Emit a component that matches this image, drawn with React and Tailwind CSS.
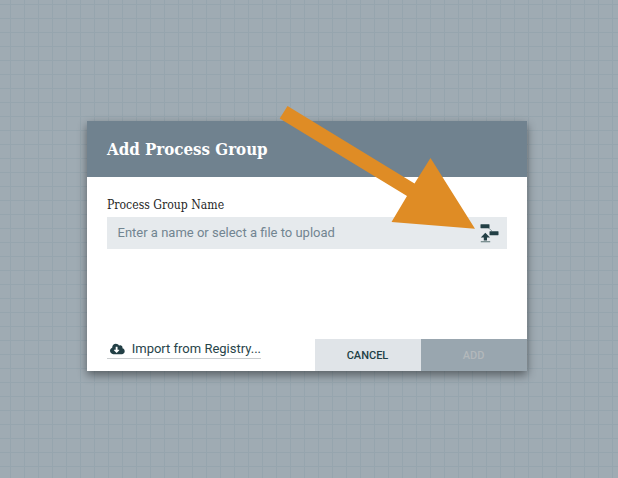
import { FaCloudDownloadAlt } from "react-icons/fa";

function UploadFlowIcon() {
  return (
    <svg width="19" height="20" viewBox="0 0 19 20" fill="#223f45" aria-hidden="true">
      <path d="M7.5 4 12 8" stroke="#8b9c9e" strokeWidth="1" />
      <rect x="0.5" y="1.3" width="9" height="3.9" rx="0.4" />
      <rect x="9.5" y="8.3" width="9" height="3.9" rx="0.4" />
      <path d="M5.3 9.8 10 14.4H7V17.5H3.8V14.4H0.8Z" />
      <rect x="0.8" y="18.1" width="9.4" height="1.2" fill="#6f8587" />
    </svg>
  );
}

export default function App() {
  return (
    <div className="relative h-[478px] w-[618px] overflow-hidden bg-[#9fabb3] bg-[linear-gradient(to_right,#96a5ae_1px,transparent_1px),linear-gradient(to_bottom,#96a5ae_1px,transparent_1px)] bg-[size:14px_14px] bg-[position:10px_4px] pl-[87px] pt-[121px] font-['Roboto',sans-serif]">
      <div className="flex h-[250px] w-[440px] flex-col bg-white shadow-[0_4px_9px_rgba(0,0,0,0.45)]">
        <header className="flex h-14 shrink-0 items-center bg-[#70828f] px-5 pt-[2px]">
          <h1 className="origin-left scale-x-[0.985] whitespace-nowrap font-['Roboto_Slab','DejaVu_Serif_Condensed','DejaVu_Serif',serif] text-[17px] font-bold text-white">
            Add Process Group
          </h1>
        </header>
        <main className="flex-1 px-5 pt-[19px]">
          <label className="block h-[21px] origin-left scale-x-[1.01] whitespace-nowrap font-['Roboto_Slab','DejaVu_Serif_Condensed','DejaVu_Serif',serif] text-[12px] leading-[18px] text-[#262626]">
            Process Group Name
          </label>
          <div className="flex h-8 items-center justify-between bg-[#e6eaed] pl-[10.5px] pr-2">
            <span className="text-[13px] text-[#728591]">Enter a name or select a file to upload</span>
            <UploadFlowIcon />
          </div>
        </main>
        <footer className="flex h-8 items-start justify-between pl-5">
          <a className="flex h-5 w-[154px] items-center whitespace-nowrap border-b border-[#c9cdcf] pl-[3px] text-[13px] text-[#28444a]">
            <FaCloudDownloadAlt className="mr-[7px] h-[14px] w-[15px] text-[#223f45]" />
            Import from Registry...
          </a>
          <div className="flex h-8 text-[11px] font-medium">
            <button className="w-[106px] bg-[#e0e4e8] pr-px pt-[2px] text-[#223f45]">CANCEL</button>
            <button className="w-[106px] bg-[#99a6af] pr-px pt-[2px] text-[#b3b8bb]">ADD</button>
          </div>
        </footer>
      </div>
      <svg className="pointer-events-none absolute inset-0" width="618" height="478" viewBox="0 0 618 478" aria-hidden="true">
        <path d="M287.5 106 414.5 183.5 430.5 158 475 228.8 391.5 222 407 196 279.7 118.5Z" fill="#df8c25" />
      </svg>
    </div>
  );
}
